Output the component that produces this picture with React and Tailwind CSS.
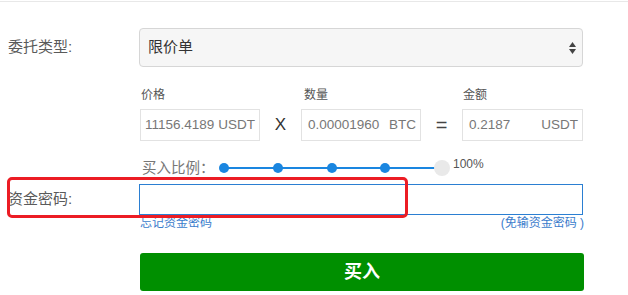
import { useState } from 'react';

const FONT = { fontFamily: '"Liberation Sans", "Noto Sans CJK SC", sans-serif' };

function UnitInput({ value, unit, spread }) {
  return (
    <div className={`h-[32px] border border-[#e2e2e2] bg-white flex items-center text-[13.5px] text-[#777] ${spread ? 'justify-between pl-[6px] pr-[4px]' : 'pl-[4px] pr-[2px] gap-[4px]'}`}>
      <span>{value}</span>
      <span>{unit}</span>
    </div>
  );
}

function Slider() {
  const stops = [0, 25, 50, 75];
  return (
    <div className="relative w-[231px] h-[16px] flex items-center justify-between">
      <div className="absolute left-[5px] right-[8px] top-[7px] h-[2px] bg-[#1a86e0]" />
      {stops.map((s) => (
        <span key={s} className="relative w-[10px] h-[10px] rounded-full bg-[#1a86e0]" />
      ))}
      <span className="relative w-[16px] h-[16px] rounded-full bg-[#e9e9e9]" />
    </div>
  );
}

export default function App() {
  const [pwd, setPwd] = useState('');

  return (
    <div className="relative w-[628px] h-[295px] overflow-hidden bg-white" style={FONT}>
      <div className="pt-px">
        <div className="h-px bg-[#e8e8e8]" />
      </div>

      {/* order type */}
      <div className="mt-[26px] flex items-center">
        <div className="w-[139px] pl-[8px] text-[15px] text-[#5a5a5a]">委托类型:</div>
        <div className="w-[444px] h-[39px] rounded-[4px] border border-[#d6d6d6] bg-[#f6f6f6] flex items-center justify-between pl-[8px] pr-[6px]">
          <span className="text-[15px] text-[#333]">限价单</span>
          <span className="flex flex-col items-center leading-none">
            <svg width="7" height="5" viewBox="0 0 7 5"><path d="M3.5 0L7 5H0z" fill="#444" /></svg>
            <svg width="7" height="5" viewBox="0 0 7 5" className="mt-[2px]"><path d="M0 0h7L3.5 5z" fill="#444" /></svg>
          </span>
        </div>
      </div>

      {/* price x amount = total */}
      <div className="mt-[20px] ml-[140px] flex items-end">
        <div className="w-[120px]">
          <div className="h-[17px] leading-[17px] text-[12px] text-[#555] pl-[1px] mb-[5px]">价格</div>
          <UnitInput value="11156.4189" unit="USDT" />
        </div>
        <div className="w-[41px] h-[32px] flex items-center justify-center text-[17px] text-[#333]">X</div>
        <div className="w-[120px]">
          <div className="h-[17px] leading-[17px] text-[12px] text-[#555] pl-[3px] mb-[5px]">数量</div>
          <UnitInput value="0.00001960" unit="BTC" spread />
        </div>
        <div className="w-[41px] h-[32px] flex items-center justify-center text-[20px] text-[#444]">=</div>
        <div className="w-[121px]">
          <div className="h-[17px] leading-[17px] text-[12px] text-[#555] pl-[1px] mb-[5px]">金额</div>
          <UnitInput value="0.2187" unit="USDT" spread />
        </div>
      </div>

      {/* ratio slider */}
      <div className="mt-[18px] ml-[142px] h-[18px] flex items-center">
        <span className="w-[77px] text-[14.5px] leading-[18px] text-[#777] whitespace-nowrap">买入比例：</span>
        <Slider />
        <span className="ml-[3px] self-start -mt-[2px] text-[12px] leading-[14px] text-[#555]">100%</span>
      </div>

      {/* fund password */}
      <div className="mt-[7px] flex items-center">
        <div className="w-[139px] pl-[8px] text-[15px] text-[#5a5a5a]">资金密码:</div>
        <input
          type="password"
          value={pwd}
          onChange={(e) => setPwd(e.target.value)}
          className="w-[444px] h-[31px] border border-[#2b7fd2] bg-white outline-none px-2 text-[14px]"
        />
      </div>

      <div className="mt-[2px] ml-[140px] w-[444px] flex justify-between text-[12px] leading-[12px] text-[#3a7ccc]">
        <a>忘记资金密码</a>
        <a>(免输资金密码 )</a>
      </div>

      <div className="mt-[24px] ml-[140px]">
        <button className="w-[444px] h-[38px] rounded-[3px] bg-[#008f00] text-white text-[18px] font-bold">买入</button>
      </div>

      {/* highlight annotation */}
      <div className="absolute left-[7px] top-[177px] w-[401px] h-[41px] border-[3px] border-[#ec1c24] rounded-[5px] pointer-events-none" />
    </div>
  );
}
